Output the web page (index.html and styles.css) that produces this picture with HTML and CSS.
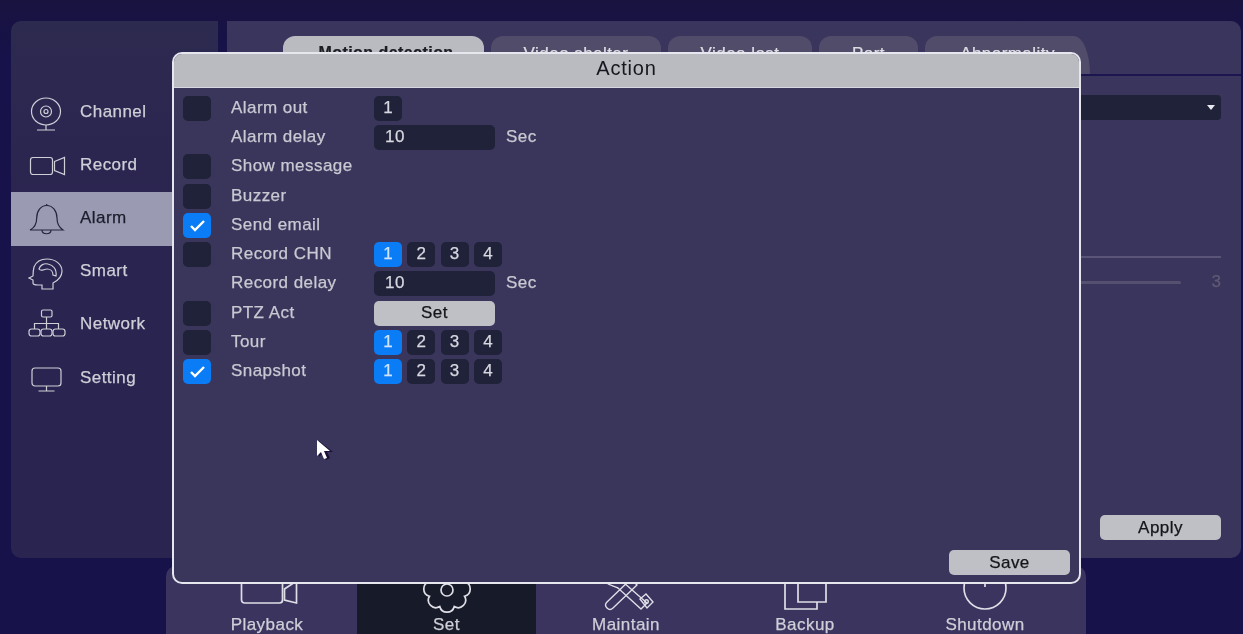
FILE: index.html
```html
<!DOCTYPE html>
<html lang="en">
<head>
<meta charset="utf-8">
<title>Action</title>
<link rel="stylesheet" href="styles.css">
</head>
<body>
<div class="screen">
  <div class="upper">
    <nav class="sidebar">
      <a class="nav-item">
        <svg class="nav-icon" viewBox="0 0 40 40"><ellipse cx="20" cy="18.500" rx="14.500" ry="13.500"/><circle cx="20" cy="18.500" r="5.500"/><circle cx="20" cy="18.500" r="2"/><path d="M20 32v5M11 37h18"/></svg>
        <span>Channel</span>
      </a>
      <a class="nav-item">
        <svg class="nav-icon" viewBox="0 0 40 40"><rect x="4.500" y="11.500" width="22" height="17" rx="2.500"/><path d="M28.500 15.500l10-4v17l-10-4z"/></svg>
        <span>Record</span>
      </a>
      <a class="nav-item active">
        <svg class="nav-icon" viewBox="0 0 40 40"><path d="M4 31c4-2 6.700-5 6.700-12 0-7 4-12.500 10-12.500S31 12 31 19c0 7 3 10 6 12z"/><path d="M20.700 6.500V5M16 31c0 5 9 5 9 0"/></svg>
        <span>Alarm</span>
      </a>
      <a class="nav-item">
        <svg class="nav-icon" viewBox="0 0 40 40"><path d="M27 37v-6c6-3 9-7 9-12 0-7-7-12-15-12-6 0-11 3-13 8-1 4-1 7-1 9l-4 2 4 2v3c0 1 2 2 5 2h4v4z"/><path d="M13 17c1-4 5-6 9-5 5 1 9 5 8 12l-3-1c0-4-3-6-6-6-3 0-6 3-8 0z"/></svg>
        <span>Smart</span>
      </a>
      <a class="nav-item">
        <svg class="nav-icon" viewBox="0 0 40 40"><rect x="15.500" y="5" width="10.500" height="7" rx="1.500"/><path d="M20.500 12v12M8.500 24v-5.500h24V24"/><rect x="3" y="24" width="11" height="7" rx="2.500"/><rect x="15" y="24" width="11" height="7" rx="2.500"/><rect x="27" y="24" width="12" height="7" rx="2.500"/></svg>
        <span>Network</span>
      </a>
      <a class="nav-item">
        <svg class="nav-icon" viewBox="0 0 40 40"><rect x="6" y="9" width="29" height="18" rx="3"/><path d="M20.500 27v5M12.500 32h16"/></svg>
        <span>Setting</span>
      </a>
    </nav>
    <main class="panel">
      <div class="tabs">
        <div class="tab tab-active tab-motion">Motion detection</div>
        <div class="tab tab-shelter">Video shelter</div>
        <div class="tab tab-lost">Video lost</div>
        <div class="tab tab-port">Port</div>
        <div class="tab tab-abnormal">Abnormality</div>
      </div>
      <div class="panel-body">
        <div class="select"><span class="caret"></span></div>
        <div class="divider"></div>
        <div class="slider-row"><div class="track"></div><span class="slider-value">3</span></div>
        <button class="btn apply">Apply</button>
      </div>
    </main>
  </div>

  <footer class="dock">
    <div class="dock-item dock-playback">
      <svg class="dock-icon" viewBox="0 0 60 42"><rect x="4.500" y="4" width="41" height="30" rx="3"/><path d="M47.500 20l12-8v22l-12-3z"/></svg>
      <span>Playback</span>
    </div>
    <div class="dock-item dock-set selected">
      <svg class="dock-icon" viewBox="0 0 60 42"><path d="M47.550 27.270a7.500 7.500 0 0 1-10.280 10.280a7.500 7.500 0 0 1-14.540 0a7.500 7.500 0 0 1-10.280-10.280a7.500 7.500 0 0 1 0-14.540a7.500 7.500 0 0 1 10.280-10.280a7.500 7.500 0 0 1 14.540 0a7.500 7.500 0 0 1 10.280 10.280a7.500 7.500 0 0 1 0 14.540z"/><circle cx="30" cy="21" r="6"/></svg>
      <span>Set</span>
    </div>
    <div class="dock-item dock-maintain">
      <svg class="dock-icon" viewBox="0 0 60 42"><path d="M11 33l24-23 6 6-24 23c-2 2-4 2-6 0s-2-4 0-6z"/><path d="M9 13c6-5 13-4 18 0l24 21-6 6-23-21c-5-2-9-3-13-6z"/><path d="M44 30l6-5 7 8-6 6z"/><circle cx="50.500" cy="32.500" r="1.800"/></svg>
      <span>Maintain</span>
    </div>
    <div class="dock-item dock-backup">
      <svg class="dock-icon" viewBox="0 0 60 42"><path d="M10 4v36h32v-7M23 4v29h28V4"/></svg>
      <span>Backup</span>
    </div>
    <div class="dock-item dock-shutdown">
      <svg class="dock-icon" viewBox="0 0 60 42"><circle cx="30" cy="19" r="21"/><path d="M30 8v10"/></svg>
      <span>Shutdown</span>
    </div>
  </footer>

  <section class="dialog">
    <header class="dialog-head">Action</header>
    <div class="form">
      <div class="row"><span class="check"></span><label>Alarm out</label><span class="chip">1</span></div>
      <div class="row"><span class="check-spacer"></span><label>Alarm delay</label><span class="input">10</span><span class="unit">Sec</span></div>
      <div class="row"><span class="check"></span><label>Show message</label></div>
      <div class="row"><span class="check"></span><label>Buzzer</label></div>
      <div class="row"><span class="check on"><svg viewBox="0 0 28 25"><path d="M8 13l4 4 9-9"/></svg></span><label>Send email</label></div>
      <div class="row"><span class="check"></span><label>Record CHN</label><div class="chips"><span class="chip on">1</span><span class="chip">2</span><span class="chip">3</span><span class="chip">4</span></div></div>
      <div class="row"><span class="check-spacer"></span><label>Record delay</label><span class="input">10</span><span class="unit">Sec</span></div>
      <div class="row"><span class="check"></span><label>PTZ Act</label><button class="btn set">Set</button></div>
      <div class="row"><span class="check"></span><label>Tour</label><div class="chips"><span class="chip on">1</span><span class="chip">2</span><span class="chip">3</span><span class="chip">4</span></div></div>
      <div class="row"><span class="check on"><svg viewBox="0 0 28 25"><path d="M8 13l4 4 9-9"/></svg></span><label>Snapshot</label><div class="chips"><span class="chip on">1</span><span class="chip">2</span><span class="chip">3</span><span class="chip">4</span></div></div>
    </div>
    <div class="dialog-foot"><button class="btn save">Save</button></div>
  </section>

  <svg class="cursor" viewBox="0 0 18 24"><path class="cursor-shadow" d="M3 2v16l4-4 3 7 4-2-3-6h6z"/><path class="cursor-arrow" d="M1 1v16l4-4 3 7 3-1-3-7h6z"/></svg>
</div>
</body>
</html>
```

FILE: styles.css
```css
* { box-sizing: border-box; }
html, body { margin: 0; padding: 0; height: 100%; background: #17124a; overflow: hidden; }
body { font-family: "Liberation Sans", Arial, sans-serif; }

.screen {
  position: relative;
  width: 1243px;
  height: 634px;
  overflow: hidden;
  background: linear-gradient(#18133f, #17124a 60px);
  filter: blur(0.45px);
  font-size: 17px;
  letter-spacing: .45px;
  -webkit-text-stroke: .25px currentColor;
}

.upper {
  display: flex;
  gap: 9px;
  height: 558px;
  padding: 21px 2px 0 11px;
}

.sidebar {
  width: 207px;
  flex: none;
  padding-top: 65px;
  background: linear-gradient(#2d2a50, #2a2450 200px);
  border-radius: 10px 0 0 10px;
}
.nav-item {
  display: flex;
  align-items: center;
  gap: 14px;
  height: 53.200px;
  padding-left: 15px;
  color: #cfcfd8;
}
.nav-item span { margin-bottom: 2px; }
.nav-item.active { background: #9a9bb2; color: #1c1c2c; }
.nav-icon {
  width: 40px;
  height: 40px;
  fill: none;
  stroke: #cfcfd8;
  stroke-width: 1.200;
}
.active .nav-icon { stroke: #25243c; }

.panel {
  flex: 1;
  display: flex;
  flex-direction: column;
  background: #3a355c;
  border-radius: 0 10px 10px 0;
}
.tabs {
  display: flex;
  gap: 7px;
  height: 55px;
  padding: 15px 0 0 56px;
  border-bottom: 2px solid #1b1650;
}
.tab {
  display: flex;
  justify-content: center;
  padding-top: 8px;
  height: 38px;
  border-radius: 12px 12px 0 0;
  background: #514c6a;
  color: #dcdce2;
}
.tab-active { background: #b9bbc0; color: #1c1c24; font-weight: bold; font-size: 16px; padding-left: 5px; }
.tab-motion { width: 201px; }
.tab-shelter { width: 170px; }
.tab-lost { width: 144px; }
.tab-port { width: 99px; }
.tab-abnormal { width: 165px; border-top-right-radius: 16px 38px; }

.panel-body {
  flex: 1;
  display: flex;
  flex-direction: column;
  padding: 19px 20px 18px 0;
  align-items: flex-end;
}
.select {
  position: relative;
  width: 620px;
  height: 25px;
  background: #1f2238;
  border-radius: 4px;
}
.caret {
  position: absolute;
  right: 6px;
  top: 10px;
  border: 4px solid transparent;
  border-top: 5px solid #e8e8ee;
  border-bottom: 0;
}
.divider { width: 620px; height: 2px; margin-top: 136px; background: #5a5578; }
.slider-row { display: flex; align-items: center; width: 620px; margin-top: 13px; height: 22px; justify-content: space-between; }
.track { width: 580px; height: 3px; background: #55506f; border-radius: 2px; }
.slider-value { color: #5f5a74; font-size: 17px; letter-spacing: 0; }

.btn {
  display: block;
  width: 121px;
  height: 25px;
  padding: 0;
  border: 0;
  border-radius: 5px;
  background: #bfc0c5;
  color: #14141c;
  font: inherit;
  letter-spacing: inherit;
}
.apply { margin-top: auto; }

.dock {
  display: flex;
  width: 920px;
  height: 68px;
  margin: 8px 0 0 166px;
  background: #3a345f;
  border-radius: 10px 10px 0 0;
  overflow: hidden;
}
.dock-item {
  display: flex;
  flex-direction: column;
  align-items: center;
  padding-top: 3px;
  color: #cfcfd8;
  line-height: 18px;
}
.dock-playback { width: 191px; padding-left: 11px; }
.dock-set { width: 179px; }
.dock-maintain { width: 180px; }
.dock-backup { width: 180px; padding-right: 2px; }
.dock-shutdown { width: 190px; padding-right: 12px; }
.dock-item.selected { background: #171a28; }
.dock-icon {
  flex: none;
  width: 60px;
  height: 42px;
  margin-bottom: 5px;
  fill: none;
  stroke: #dedee6;
  stroke-width: 1.700;
  overflow: visible;
}
.dock-maintain .dock-icon { stroke-width: 1.400; }

.dialog {
  position: absolute;
  left: 172px;
  top: 52px;
  width: 909px;
  height: 532px;
  display: flex;
  flex-direction: column;
  background: #3a355b;
  border: 2px solid #e6e6ee;
  border-radius: 10px;
  overflow: hidden;
}
.dialog-head {
  flex: none;
  height: 34px;
  line-height: 28px;
  text-align: center;
  background: #b9bbc0;
  color: #16161e;
  font-size: 20px;
  letter-spacing: .8px;
  -webkit-text-stroke: 0;
  border-bottom: 1px solid #d8d8e2;
}
.form {
  display: grid;
  grid-auto-rows: 25px;
  row-gap: 4.220px;
  padding: 8px 0 0 9px;
}
.row {
  display: flex;
  align-items: center;
  color: #c9c9d3;
}
.row label { width: 143px; flex: none; margin-bottom: 1px; }
.check, .check-spacer {
  flex: none;
  width: 28px;
  height: 25px;
  margin-right: 20px;
  border-radius: 5px;
}
.check { background: #1f2238; }
.check.on { background: #0a7cf5; }
.check svg { display: block; fill: none; stroke: #fff; stroke-width: 2.400; }
.chips { display: flex; gap: 5.300px; }
.chip {
  display: block;
  width: 28px;
  height: 25px;
  line-height: 23px;
  text-align: center;
  background: #1f2238;
  border-radius: 5px;
  color: #d8d8e0;
  letter-spacing: 0;
}
.chip.on { background: #0a7cf5; color: #cfe2fb; }
.input {
  width: 121px;
  height: 25px;
  line-height: 23px;
  padding-left: 11px;
  background: #1f2238;
  border-radius: 5px;
  color: #d8d8e0;
}
.unit { margin: 0 0 1px 11px; }
.dialog-foot {
  margin-top: auto;
  padding: 0 9px 7px 0;
  display: flex;
  justify-content: flex-end;
}

.cursor {
  position: absolute;
  left: 316px;
  top: 439px;
  width: 18px;
  height: 24px;
}
.cursor-shadow { fill: #1d0f38; }
.cursor-arrow { fill: #fff; }
```
